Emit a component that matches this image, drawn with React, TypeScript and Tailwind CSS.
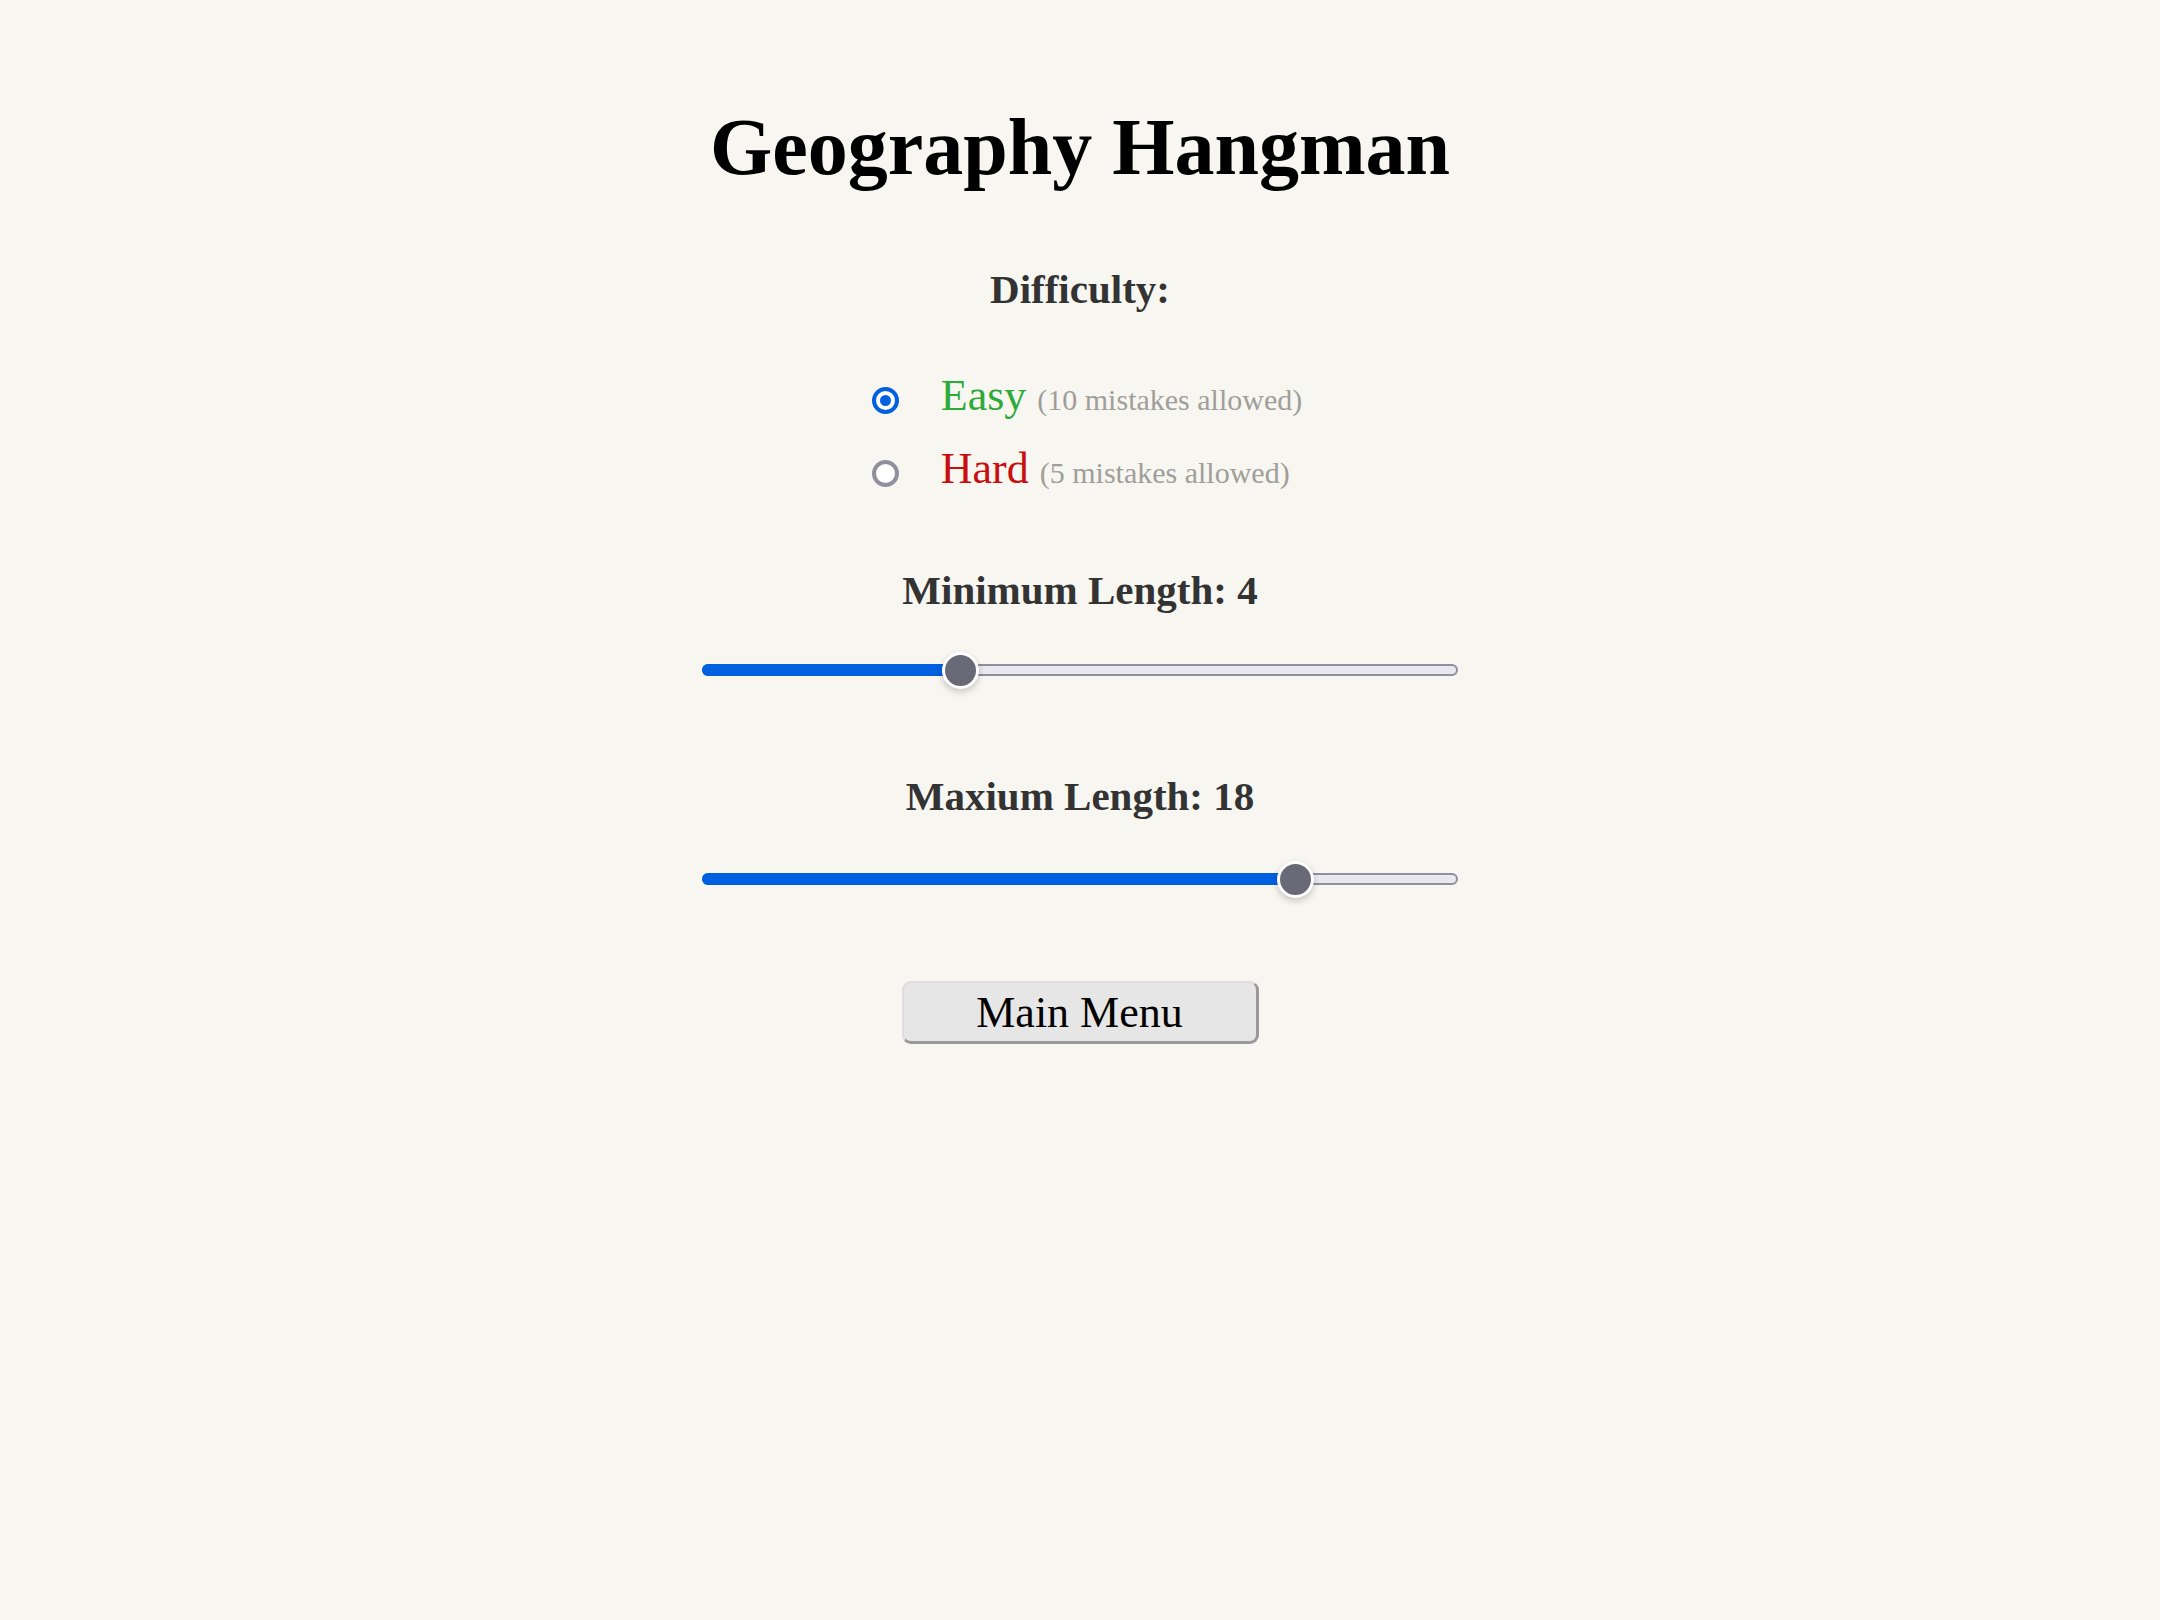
import { useState } from 'react'

type Difficulty = 'easy' | 'hard'

function Slider({ value, min, max }: { value: number; min: number; max: number }) {
  // thumb is 37px, track is 756px
  const frac = (value - min) / (max - min)
  const center = 18.5 + frac * (756 - 37)

  return (
    <div className="relative h-[40px] w-[756px] flex items-center">
      <div className="h-[12px] w-full rounded-full border-2 border-[#8f8f9d] bg-[#e9e8ef]" />
      <div
        className="absolute left-0 top-[14px] h-[12px] rounded-l-full bg-[#0060df]"
        style={{ width: center }}
      />
      <div
        className="absolute top-[1.5px] h-[37px] w-[37px] rounded-full border-[3px] border-white bg-[#696977] shadow-[0_3px_7px_rgba(0,0,0,0.2)]"
        style={{ left: center - 18.5 }}
      />
    </div>
  )
}

function RadioRow({
  checked,
  onSelect,
  label,
  labelColor,
  note,
}: {
  checked: boolean
  onSelect: () => void
  label: string
  labelColor: string
  note: string
}) {
  return (
    <label className="flex items-start h-[50px] cursor-pointer" onClick={onSelect}>
      <span
        className={
          'mt-[16px] flex h-[27px] w-[27px] shrink-0 items-center justify-center rounded-full border-[4px] bg-white ' +
          (checked ? 'border-[#0060df]' : 'border-[#8f8f9d]')
        }
      >
        {checked && <span className="h-[11px] w-[11px] rounded-full bg-[#0060df]" />}
      </span>
      <span className="ml-[42px] text-[44px] leading-[50px] whitespace-nowrap">
        <span className={labelColor}>{label}</span>
        <span className="ml-[11px] text-[30px] leading-none text-[#a09e9a]">{note}</span>
      </span>
    </label>
  )
}

function App() {
  const [difficulty, setDifficulty] = useState<Difficulty>('easy')
  const [minLength] = useState(4)
  const [maxLength] = useState(18)

  return (
    <div
      className="min-h-screen w-full bg-[#f7f6f0] flex flex-col items-center"
      style={{ fontFamily: '"Liberation Serif", "Times New Roman", serif' }}
    >
      <h1 className="mt-[101px] text-[80px] leading-[92px] font-bold text-black">Geography Hangman</h1>

      <h3 className="mt-[73px] text-[41px] leading-[47px] font-bold text-[#333]">Difficulty:</h3>

      <div className="mt-[58px] w-fit pl-[14px] flex flex-col gap-[23px]">
        <RadioRow
          checked={difficulty === 'easy'}
          onSelect={() => setDifficulty('easy')}
          label="Easy"
          labelColor="text-[#2eaa3a]"
          note="(10 mistakes allowed)"
        />
        <RadioRow
          checked={difficulty === 'hard'}
          onSelect={() => setDifficulty('hard')}
          label="Hard"
          labelColor="text-[#c80f0f]"
          note="(5 mistakes allowed)"
        />
      </div>

      <h3 className="mt-[73px] text-[41px] leading-[47px] font-bold text-[#333]">Minimum Length: {minLength}</h3>
      <div className="mt-[36px]">
        <Slider value={minLength} min={1} max={10} />
      </div>

      <h3 className="mt-[83px] text-[41px] leading-[47px] font-bold text-[#333]">Maxium Length: {maxLength}</h3>
      <div className="mt-[39px]">
        <Slider value={maxLength} min={2} max={22} />
      </div>

      <button className="mt-[82px] h-[63px] w-[357px] rounded-[9px] border-t-2 border-l-2 border-r-[3px] border-b-[3px] border-t-[#dedede] border-l-[#dedede] border-r-[#999] border-b-[#999] bg-[#e6e6e6] pt-[2px] text-[44px] leading-[50px] text-black">
        Main Menu
      </button>
    </div>
  )
}

export default App
